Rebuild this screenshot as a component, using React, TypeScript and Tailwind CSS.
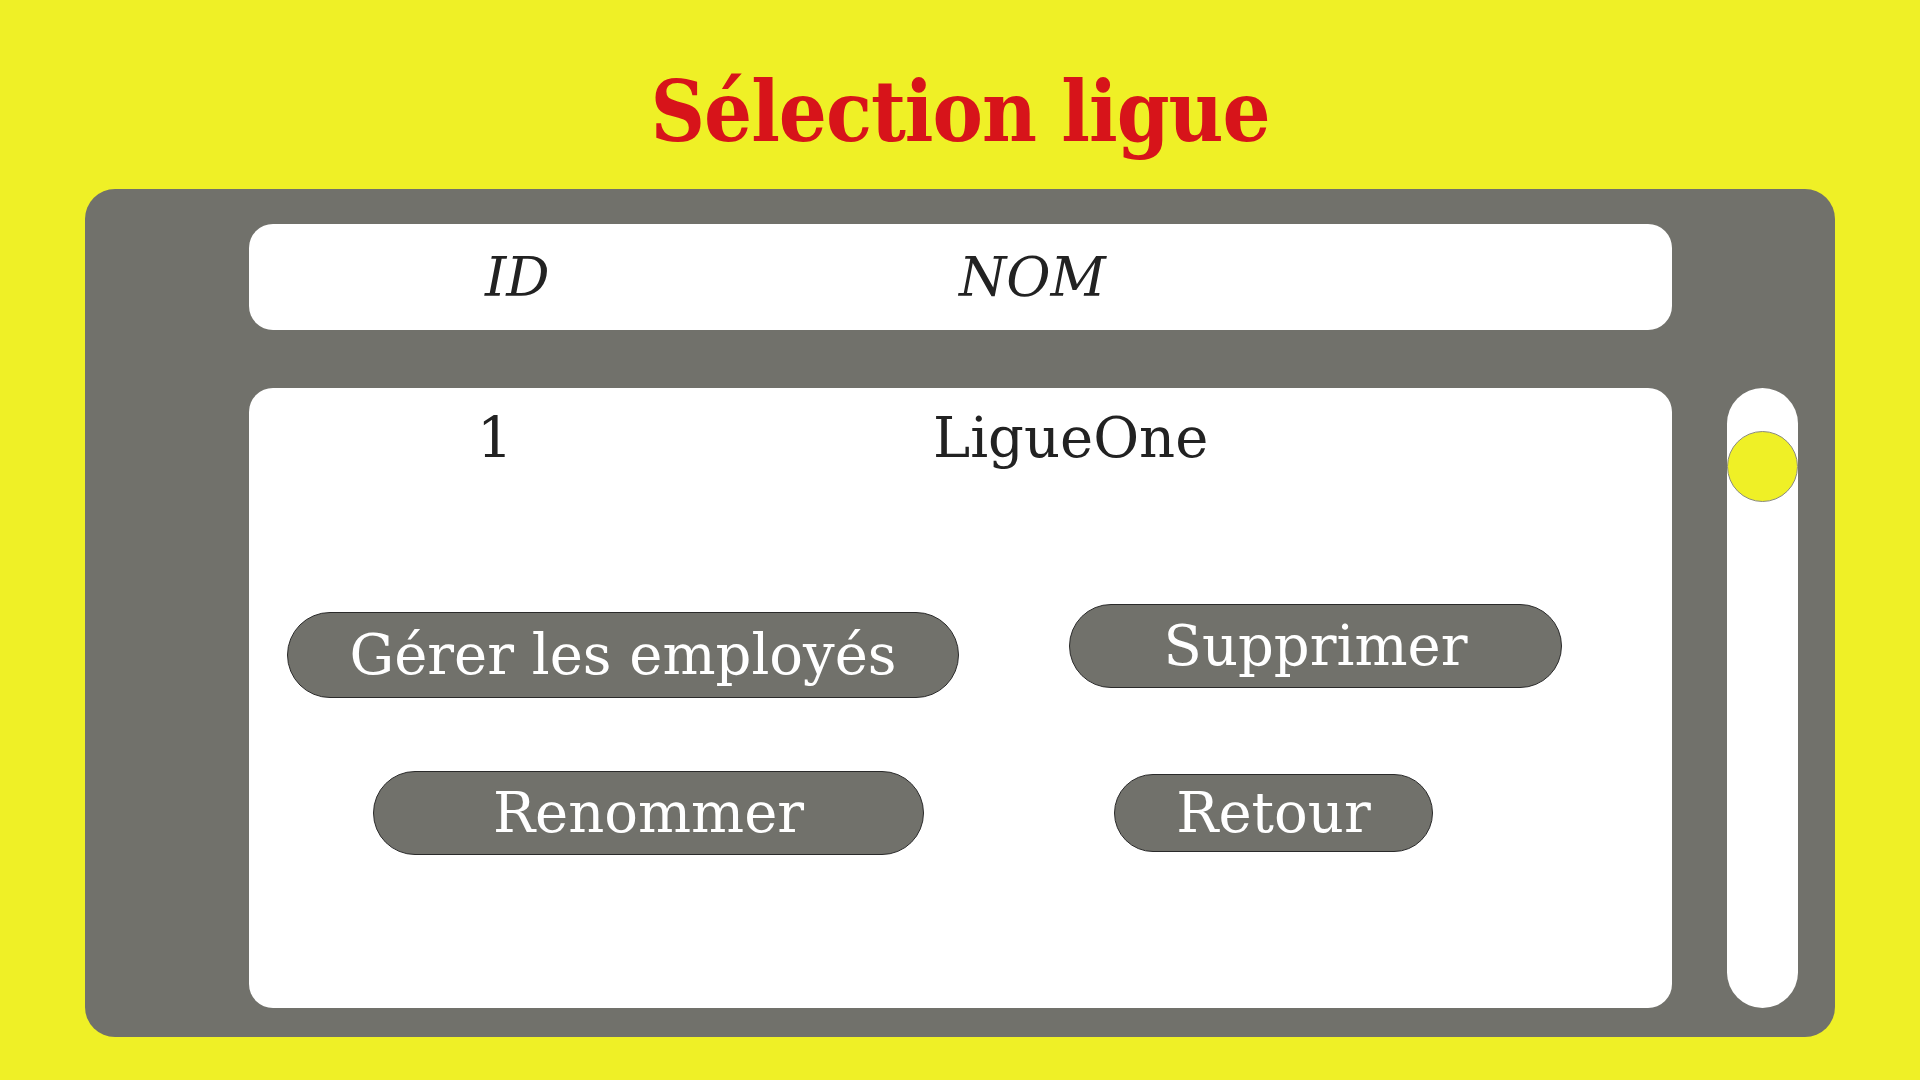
import React from "react";

const serif = "font-['DejaVu_Serif','Liberation_Serif',serif]";

const PillButton: React.FC<{ label: string; className?: string }> = ({ label, className = "" }) => (
  <button
    className={`flex items-center justify-center rounded-full border border-[#2a2a2a] bg-[#71716b] text-white text-[56px] leading-none ${serif} ${className}`}
  >
    {label}
  </button>
);

export default function App() {
  return (
    <div className="w-[1920px] h-[1080px] bg-[#eff026] flex flex-col items-center overflow-hidden">
      {/* Title */}
      <div className="h-[189px] w-full flex items-center justify-center">
        <h1
          className={`text-[#d7141a] text-[84px] font-bold leading-none tracking-[-1px] font-['DejaVu_Serif_Condensed','DejaVu_Serif',serif] pt-[34px]`}
        >
          Sélection ligue
        </h1>
      </div>

      {/* Panel */}
      <div className="w-[1750px] h-[848px] rounded-[30px] bg-[#71716b] flex pl-[164px] pt-[35px] pr-[37px] pb-[29px] gap-[55px]">
        <div className="flex-1 flex flex-col gap-[58px]">
          {/* Header */}
          <div className={`h-[106px] rounded-[24px] bg-white flex items-center text-[#222] italic text-[54px] ${serif}`}>
            <span className="ml-[236px] w-[474px]">ID</span>
            <span>NOM</span>
          </div>

          {/* Body */}
          <div className="flex-1 rounded-[24px] bg-white flex flex-col">
            <div className={`flex items-center text-[#222] text-[56px] leading-none pt-[22px] ${serif}`}>
              <span className="ml-[228px] w-[456px]">1</span>
              <span>LigueOne</span>
            </div>

            <div className="flex items-start mt-[138px]">
              <PillButton label="Gérer les employés" className="ml-[38px] mt-[8px] w-[672px] h-[86px]" />
              <PillButton label="Supprimer" className="ml-[110px] w-[493px] h-[84px]" />
            </div>

            <div className="flex items-center mt-[73px]">
              <PillButton label="Renommer" className="ml-[124px] w-[551px] h-[84px]" />
              <PillButton label="Retour" className="ml-[190px] w-[319px] h-[78px]" />
            </div>
          </div>
        </div>

        {/* Scroll track */}
        <div className="w-[71px] mt-[164px] rounded-full bg-white pt-[43px]">
          <div className="w-[71px] h-[71px] rounded-full bg-[#eff026] border border-[#8a8a80]" />
        </div>
      </div>
    </div>
  );
}
